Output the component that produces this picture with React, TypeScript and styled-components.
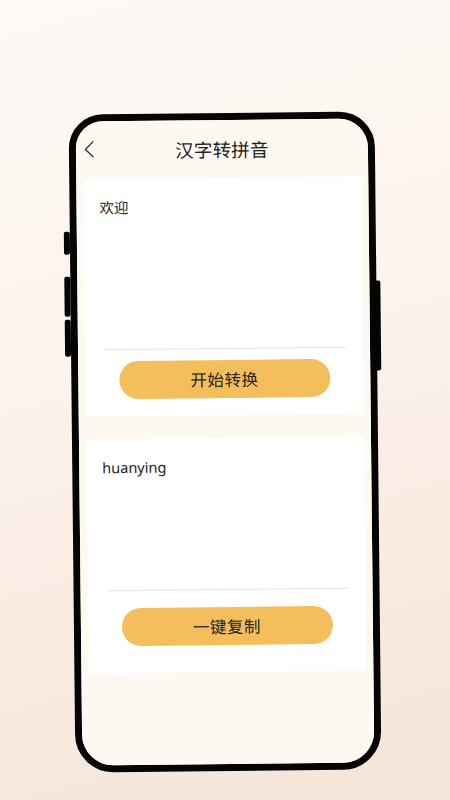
import React from 'react';
import styled, { createGlobalStyle } from 'styled-components';

const GlobalStyle = createGlobalStyle`
  html, body {
    margin: 0;
    padding: 0;
  }
  body {
    font-family: 'Noto Sans', 'Noto Sans CJK SC', sans-serif;
    color: #222;
  }
`;

type CardProps = {
  text: string;
  action: string;
  height: number;
  contentHeight: number;
  buttonGap: number;
};

const ConvertCard = ({ text, action, height, contentHeight, buttonGap }: CardProps) => (
  <Card $height={height}>
    <Content $height={contentHeight}>{text}</Content>
    <Divider />
    <ActionButton $gap={buttonGap}>{action}</ActionButton>
  </Card>
);

const App = (): JSX.Element => {
  return (
    <Page>
      <GlobalStyle />
      <Phone>
        <SideKey $side='left' $top={117} $height={23} />
        <SideKey $side='left' $top={162} $height={40} />
        <SideKey $side='left' $top={205} $height={37} />
        <SideKey $side='right' $top={169} $height={90} />
        <Screen>
          <Header>
            <BackButton aria-label='back'>
              <svg width='12' height='18' viewBox='0 0 12 18' fill='none'>
                <polyline
                  points='10,1.5 2.5,9 10,16.5'
                  stroke='#333'
                  strokeWidth='1.4'
                  strokeLinecap='round'
                  strokeLinejoin='round'
                />
              </svg>
            </BackButton>
            <Title>汉字转拼音</Title>
          </Header>
          <Cards>
            <ConvertCard text='欢迎' action='开始转换' height={237} contentHeight={170} buttonGap={11} />
            <ConvertCard text='huanying' action='一键复制' height={234} contentHeight={151} buttonGap={17} />
          </Cards>
        </Screen>
      </Phone>
    </Page>
  );
};

const Page = styled.div`
  width: 450px;
  height: 800px;
  box-sizing: border-box;
  padding-top: 113px;
  display: flex;
  justify-content: center;
  align-items: flex-start;
  overflow: hidden;
  background: linear-gradient(165deg, #fdf9f5 0%, #fcf4ee 40%, #f9ebe2 70%, #f3e5d7 100%);
`;

const Phone = styled.div`
  position: relative;
  width: 306px;
  height: 658px;
  box-sizing: border-box;
  border: 7px solid #050505;
  border-radius: 34px 36px 38px 38px;
  transform: rotate(-0.6deg);
`;

const SideKey = styled.div<{ $side: 'left' | 'right'; $top: number; $height: number }>`
  position: absolute;
  top: ${(p) => p.$top - 7}px;
  ${(p) => (p.$side === 'left' ? 'left: -13px;' : 'right: -11px;')}
  width: 6px;
  height: ${(p) => p.$height}px;
  background: #050505;
  border-radius: 2px;
`;

const Screen = styled.div`
  height: 100%;
  background: #fdf9f1;
  border-radius: 27px 29px 31px 31px;
  overflow: hidden;
  display: flex;
  flex-direction: column;
`;

const Header = styled.div`
  position: relative;
  height: 58px;
  display: flex;
  align-items: center;
  justify-content: center;
`;

const BackButton = styled.div`
  position: absolute;
  left: 7px;
  top: 19px;
  display: flex;
`;

const Title = styled.div`
  font-family: 'Noto Sans CJK SC', sans-serif;
  font-size: 18.5px;
  color: #1e1e1e;
  letter-spacing: 0.2px;
`;

const Cards = styled.div`
  display: flex;
  flex-direction: column;
  gap: 23px;
  padding: 0 7px;
`;

const Card = styled.div<{ $height: number }>`
  height: ${(p) => p.$height}px;
  background: #ffffff;
  border-radius: 3px;
  display: flex;
  flex-direction: column;
`;

const Content = styled.div<{ $height: number }>`
  height: ${(p) => p.$height}px;
  box-sizing: border-box;
  padding: 17px 16px 0;
  font-family: 'Noto Sans', 'Noto Sans CJK SC', sans-serif;
  font-size: 14.5px;
  line-height: 22px;
  color: #222;
`;

const Divider = styled.div`
  height: 1px;
  margin: 0 17px 0 19px;
  background: #e4e4e4;
`;

const ActionButton = styled.div<{ $gap: number }>`
  margin: ${(p) => p.$gap}px auto 0;
  width: 211px;
  height: 38px;
  border-radius: 19px;
  background: #f3be5b;
  display: flex;
  align-items: center;
  justify-content: center;
  font-family: 'Noto Sans CJK SC', sans-serif;
  font-size: 16.5px;
  color: #262626;
  letter-spacing: 0.5px;
`;

export default App;
